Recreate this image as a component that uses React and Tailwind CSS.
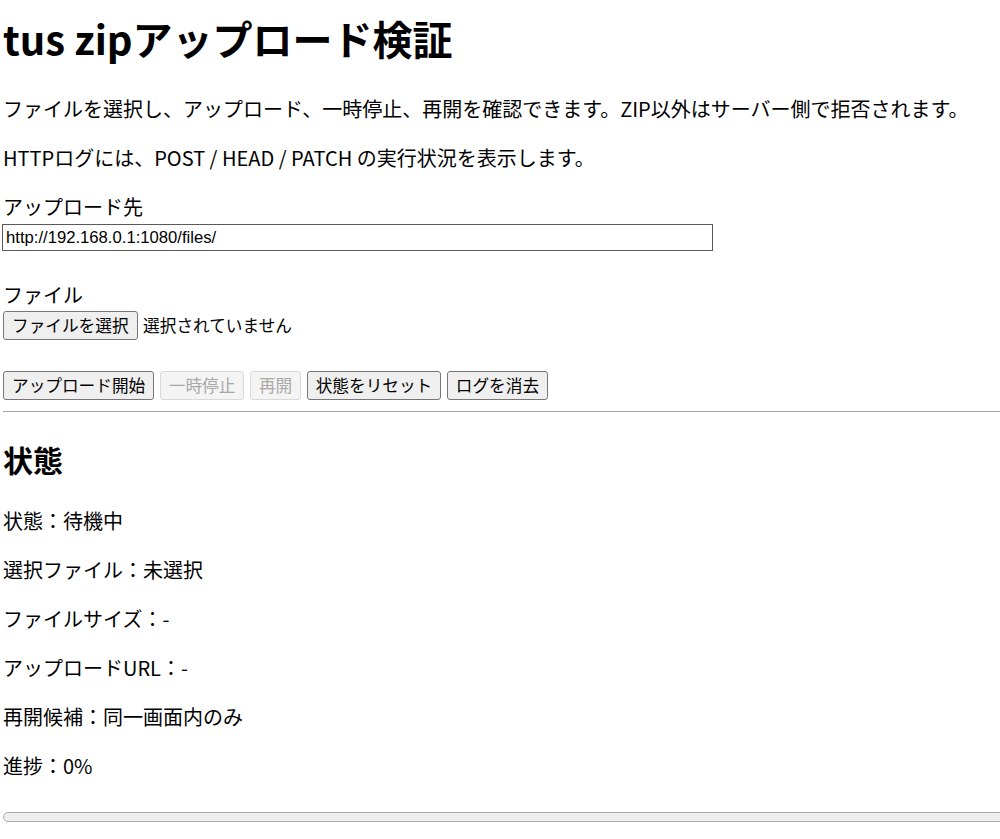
import { useState } from 'react';

const statusRows = [
  ['状態', '待機中'],
  ['選択ファイル', '未選択'],
  ['ファイルサイズ', '-'],
  ['アップロードURL', '-'],
  ['再開候補', '同一画面内のみ'],
  ['進捗', '0%'],
];

const btn =
  'h-[29px] px-[8px] border rounded-[3px] text-[16.67px] leading-none whitespace-nowrap';

const App = () => {
  const [endpoint, setEndpoint] = useState('http://192.168.0.1:1080/files/');

  return (
    <div className="h-[839px] w-full overflow-hidden bg-white text-black">
      <div className="w-[1012px] pl-[3px] pt-[9px] font-['Noto_Sans_CJK_JP','Noto_Sans',sans-serif] text-[20px] leading-[29px]">
        <h1 className="mb-[27px] text-[40px] font-bold leading-[58px]">tus zipアップロード検証</h1>

        <p className="mb-[20px]">
          ファイルを選択し、アップロード、一時停止、再開を確認できます。ZIP以外はサーバー側で拒否されます。
        </p>
        <p className="mb-[20px]">HTTPログには、POST / HEAD / PATCH の実行状況を表示します。</p>

        <label className="block">アップロード先</label>
        <input
          value={endpoint}
          onChange={(e) => setEndpoint(e.target.value)}
          className="mt-[3px] ml-[-1px] block h-[27px] w-[711px] border border-[#5a5a5a] px-[3px] font-['Liberation_Sans',Arial,sans-serif] text-[16.67px] text-black outline-none"
        />

        <label className="mt-[29px] block">ファイル</label>
        <div className="mt-[2px] flex items-center gap-[5.5px]">
          <button className={`${btn} border-[#767676] bg-[#efefef] text-black`}>ファイルを選択</button>
          <span className="text-[16.67px]">選択されていません</span>
        </div>

        <div className="mt-[31px] flex items-center gap-[5.5px]">
          <button className={`${btn} border-[#767676] bg-[#efefef] text-black`}>アップロード開始</button>
          <button disabled className={`${btn} border-[#d9d9d9] bg-[#f4f4f4] text-[#a8a8a8]`}>一時停止</button>
          <button disabled className={`${btn} border-[#d9d9d9] bg-[#f4f4f4] text-[#a8a8a8]`}>再開</button>
          <button className={`${btn} border-[#767676] bg-[#efefef] text-black`}>状態をリセット</button>
          <button className={`${btn} border-[#767676] bg-[#efefef] text-black`}>ログを消去</button>
        </div>

        <hr className="mt-[11px] border-t-[1.5px] border-[#a3a3a3]" />

        <h2 className="mt-[26px] mb-[25px] text-[30px] font-bold leading-[43px]">状態</h2>

        {statusRows.map(([k, v], i) => (
          <p key={k} className={i < statusRows.length - 1 ? 'mb-[20px]' : ''}>
            {k}：{v}
          </p>
        ))}

        <div className="mt-[32px] h-[10px] rounded-full border border-[#ababab] bg-[#efefef]" />
      </div>
    </div>
  );
};

export default App;
